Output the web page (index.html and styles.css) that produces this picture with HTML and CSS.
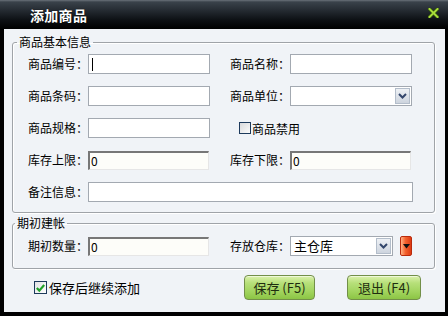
FILE: index.html
```html
<!DOCTYPE html>
<html lang="zh-CN">
<head>
<meta charset="utf-8">
<title>添加商品</title>
<link rel="stylesheet" href="styles.css">
</head>
<body>
<div class="window">
  <div class="titlebar">
    <span class="title">添加商品</span>
    <span class="close">
      <svg width="11" height="10" viewBox="0 0 11 10"><path d="M1.5 1 L9.5 9 M9.5 1 L1.5 9" stroke="#2d4a0c" stroke-width="3.6" stroke-linecap="square"/><path d="M1.5 1 L9.5 9 M9.5 1 L1.5 9" stroke="#a8dc3a" stroke-width="2" stroke-linecap="square"/></svg>
    </span>
  </div>
  <div class="body">
    <fieldset class="group g1">
      <legend class="legend">商品基本信息</legend>
      <div class="grid">
        <span class="lbl">商品编号：</span><input class="field caret" type="text">
        <span></span>
        <span class="lbl">商品名称：</span><input class="field" type="text">

        <span class="lbl">商品条码：</span><input class="field" type="text">
        <span></span>
        <span class="lbl">商品单位：</span>
        <div class="select"><span class="sel-text"></span><span class="arrow"><svg width="9" height="6" viewBox="0 0 9 6"><path d="M1 1 L4.5 4.5 L8 1" fill="none" stroke="#33466c" stroke-width="2"/></svg></span></div>

        <span class="lbl">商品规格：</span><input class="field" type="text">
        <span></span>
        <label class="check-cell"><span class="box"></span><span>商品禁用</span></label>

        <span class="lbl">库存上限：</span><input class="field sunken" type="text" value="0">
        <span></span>
        <span class="lbl">库存下限：</span><input class="field sunken" type="text" value="0">

        <span class="lbl">备注信息：</span><input class="field wide" type="text">
      </div>
    </fieldset>

    <fieldset class="group g2">
      <legend class="legend">期初建帐</legend>
      <div class="grid">
        <span class="lbl">期初数量：</span><input class="field sunken" type="text" value="0">
        <span></span>
        <span class="lbl">存放仓库：</span>
        <div class="store">
          <div class="select short"><span class="sel-text">主仓库</span><span class="arrow"><svg width="9" height="6" viewBox="0 0 9 6"><path d="M1 1 L4.5 4.5 L8 1" fill="none" stroke="#33466c" stroke-width="2"/></svg></span></div>
          <span class="redbtn"><svg width="7" height="5" viewBox="0 0 7 5"><path d="M0 0 H7 L3.5 4.5 Z" fill="#111"/></svg></span>
        </div>
      </div>
    </fieldset>

    <div class="footer">
      <label class="keep"><span class="box checked"><svg width="11" height="10" viewBox="0 0 11 10"><path d="M1.8 5 L4.3 7.6 L9.2 2" fill="none" stroke="#22a12a" stroke-width="2.2"/></svg></span><span>保存后继续添加</span></label>
      <button class="btn save" type="button">保存 (F5)</button>
      <button class="btn exit" type="button">退出 (F4)</button>
    </div>
  </div>
</div>
</body>
</html>
```
FILE: styles.css
```css
html, body {
  margin: 0;
  padding: 0;
  background: #000;
}

body {
  font-family: "Noto Sans CJK SC", "Noto Sans", sans-serif;
  font-size: 12px;
  color: #000;
}

.window {
  width: 448px;
  height: 316px;
  display: flex;
  flex-direction: column;
  background: #000;
  overflow: hidden;
}

.titlebar {
  height: 29px;
  flex: none;
  display: flex;
  align-items: center;
  padding: 0 9px 0 30px;
  background: linear-gradient(#6a7179 0, #3a424a 2px, #262c33 10px, #0d1014 20px, #000 29px);
}

.title {
  flex: 1;
  color: #fff;
  font-size: 14px;
  font-weight: bold;
  line-height: 16px;
  letter-spacing: 0.3px;
  text-shadow: 0 0 1px #000;
}

.close {
  display: flex;
  margin-top: -3px;
}

.body {
  flex: 1;
  margin: 0 3px 4px 4px;
  background: #f0f3f7;
  padding: 6px 10px 0 8px;
  display: flex;
  flex-direction: column;
}

.group {
  margin: 0;
  border: 1px solid #9fa3a8;
  border-radius: 3px;
  box-shadow: inset 1px 1px 0 #fff, 1px 1px 0 #fff;
  min-width: 0;
}

.g1 {
  padding: 5px 0 10px 15px;
}

.g2 {
  margin-top: 3px;
  padding: 6px 0 12px 15px;
}

.legend {
  font-size: 12px;
  line-height: 14px;
  padding: 0 2px;
  margin-left: -11px;
}

.g2 .legend {
  margin-left: -13px;
}

.grid {
  display: grid;
  grid-template-columns: 60px 122px 20px 60px 122px;
  grid-auto-rows: 20px;
  row-gap: 12px;
  align-items: center;
}

.lbl {
  text-align: right;
  white-space: nowrap;
  line-height: 20px;
}

.field {
  box-sizing: border-box;
  width: 122px;
  height: 20px;
  margin: 0;
  padding: 0 2px;
  border: 1px solid #a3a9b1;
  background: #fff;
  font: 12px "Noto Sans CJK SC", "Noto Sans", sans-serif;
  color: #000;
  outline: none;
}

.caret {
  background: #fff linear-gradient(#000, #000) no-repeat 3px 3px / 1px 13px;
}

.sunken {
  width: 121px;
  height: 19px;
  border-width: 2px 1px 1px 2px;
  border-color: #777 #e6e6e6 #e6e6e6 #777;
  background: #fdfdf9;
  padding: 0 1px;
  line-height: 15px;
}

.wide {
  grid-column: 2 / 6;
  width: 325px;
}

.select {
  box-sizing: border-box;
  width: 122px;
  height: 20px;
  border: 1px solid #a3a9b1;
  background: #fff;
  display: flex;
  align-items: center;
  padding: 0 1px 0 3px;
}

.select.short {
  width: 107px;
}

.sel-text {
  flex: 1;
  font-size: 13px;
  line-height: 18px;
}

.arrow {
  box-sizing: border-box;
  width: 15px;
  height: 16px;
  border: 1px solid #b3bdca;
  background: linear-gradient(#eef1f5, #cdd4de);
  display: flex;
  align-items: center;
  justify-content: center;
}

.store {
  display: flex;
  align-items: center;
}

.redbtn {
  box-sizing: border-box;
  margin-left: 7px;
  width: 12px;
  height: 20px;
  border: 1px solid #b92a0c;
  border-radius: 2px;
  background: linear-gradient(to right, #ffb184, #f3622e 45%, #dd3a12);
  display: flex;
  align-items: center;
  justify-content: center;
}

.check-cell {
  grid-column: 4 / 6;
  display: flex;
  align-items: center;
  padding-left: 9px;
  gap: 1px;
}

.box {
  box-sizing: border-box;
  width: 12px;
  height: 12px;
  border: 1px solid #1d3a5c;
  background: linear-gradient(135deg, #d9dadc, #fbfbfb);
  display: flex;
  align-items: center;
  justify-content: center;
  flex: none;
}

.box.checked {
  width: 13px;
  height: 13px;
  background: linear-gradient(135deg, #e3e4e6, #fdfdfd);
}

.footer {
  margin-top: 6px;
  height: 25px;
  display: flex;
  align-items: center;
}

.keep {
  margin-left: 22px;
  display: flex;
  align-items: center;
  gap: 2px;
  font-size: 13px;
}

.btn {
  box-sizing: border-box;
  height: 25px;
  margin: 0;
  padding: 0;
  border: 1px solid #728f49;
  border-radius: 4px;
  background: linear-gradient(#dcf1ad 0, #b7e07a 30%, #a0d35c 70%, #8cc545 100%);
  box-shadow: inset 0 1px 0 rgba(255, 255, 255, 0.55);
  font: 13px "Noto Sans CJK SC", "Noto Sans", sans-serif;
  color: #1e2d10;
}

.save {
  margin-left: auto;
  width: 71px;
}

.exit {
  margin-left: 32px;
  margin-right: 14px;
  width: 74px;
}
```
